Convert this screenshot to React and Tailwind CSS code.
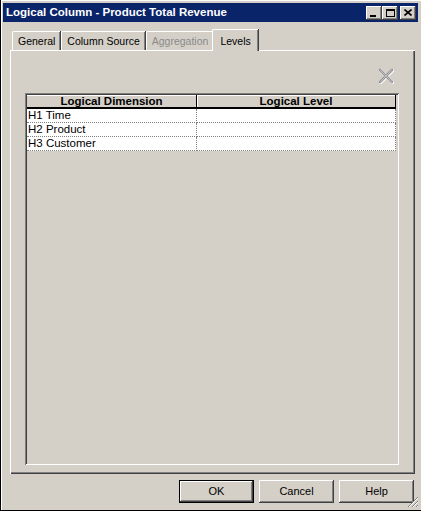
import { useState } from "react";

const raised =
  "bg-[#d4d0c8] shadow-[inset_-1px_-1px_#404040,inset_1px_1px_#ffffff,inset_-2px_-2px_#808080,inset_2px_2px_#d4d0c8]";

function TitleButton({ children }) {
  return (
    <div className={"w-[16px] h-[14px] flex items-center justify-center " + raised}>
      {children}
    </div>
  );
}

function Tab({ label, active, disabled }) {
  if (active) {
    return (
      <div className="relative z-10 h-[22px] px-[7px] -mx-[2px] flex items-start pt-[4px] bg-[#d4d0c8] border-l border-t border-white rounded-tl-[2px] shadow-[inset_-1px_0_#808080,1px_0_#404040]">
        <span className="text-black">{label}</span>
      </div>
    );
  }
  return (
    <div className="h-[20px] px-[5px] flex items-start pt-[2px] bg-[#d4d0c8] border-l border-t border-white rounded-tl-[2px] shadow-[inset_-1px_0_#808080,1px_0_#404040] mr-[1px]">
      <span className={disabled ? "text-[#8a8a8a]" : "text-black"}>{label}</span>
    </div>
  );
}

function Button({ label, isDefault }) {
  return (
    <button
      className={
        "w-[75px] h-[23px] text-[11px] text-black flex items-center justify-center " +
        (isDefault
          ? "bg-[#d4d0c8] border border-black shadow-[inset_-1px_-1px_#404040,inset_1px_1px_#ffffff,inset_-2px_-2px_#808080]"
          : raised)
      }
    >
      {label}
    </button>
  );
}

const rows = ["H1 Time", "H2 Product", "H3 Customer"];

export default function App() {
  const [tab] = useState("Levels");

  return (
    <div
      className="w-[421px] h-[511px] bg-[#d4d0c8] border-l border-b border-black flex flex-col p-[2px] pl-[2px] shadow-[inset_1px_1px_#ffffff]"
      style={{ fontFamily: '"Liberation Sans", Arial, sans-serif' }}
    >
      {/* title bar */}
      <div className="h-[19px] mt-[1px] bg-[#0a246a] flex items-center justify-between pl-[3px] pr-[2px] mr-[1px]">
        <span className="text-white font-bold text-[11.5px]">
          Logical Column - Product Total Revenue
        </span>
        <div className="flex items-center">
          <TitleButton>
            <div className="w-[6px] h-[2px] bg-black mt-[7px] -ml-[2px]" />
          </TitleButton>
          <TitleButton>
            <div className="w-[9px] h-[8px] border border-black border-t-2" />
          </TitleButton>
          <div className="w-[2px]" />
          <TitleButton>
            <svg width="8" height="7" viewBox="0 0 8 7">
              <path d="M0.5 0.5 L7.5 6.5 M7.5 0.5 L0.5 6.5" stroke="black" strokeWidth="1.6" />
            </svg>
          </TitleButton>
        </div>
      </div>

      {/* tabs */}
      <div className="mt-[7px] ml-[7px] mr-[4px] flex flex-col text-[10.5px]">
        <div className="flex items-end h-[22px] pl-[2px] -mb-[1px] text-[10.5px]">
          <Tab label="General" active={tab === "General"} />
          <Tab label="Column Source" active={tab === "Column Source"} />
          <Tab label="Aggregation" disabled />
          <Tab label="Levels" active={tab === "Levels"} />
        </div>

        {/* tab panel */}
        <div className="h-[424px] border-l border-t border-white shadow-[inset_-1px_-1px_#404040,inset_-2px_-2px_#808080] flex flex-col pl-[14px] pr-[16px] pt-[17px] pb-[9px]">
          <div className="flex justify-end pr-[5px] h-[16px]">
            <svg width="16" height="16" viewBox="0 0 16 16">
              <path d="M2 2 L14 14 M14 2 L2 14" stroke="#ffffff" strokeWidth="3.2" strokeLinecap="round" transform="translate(0.6 0.6)" />
              <path d="M2 2 L14 14 M14 2 L2 14" stroke="#9a9a9a" strokeWidth="2.6" strokeLinecap="round" />
              <path d="M2.5 2.5 L13.5 13.5 M13.5 2.5 L2.5 13.5" stroke="#c8c8c8" strokeWidth="0.8" strokeLinecap="round" />
            </svg>
          </div>

          {/* table */}
          <div className="mt-[9px] flex-1 p-[2px] shadow-[inset_1px_1px_#808080,inset_-1px_-1px_#ffffff,inset_2px_2px_#404040,inset_-2px_-2px_#d4d0c8] flex flex-col">
            <div className="flex h-[14px] text-black font-bold text-[11.5px] leading-[13px] pr-[1px]">
              <div className="w-[170px] text-center border-b-2 border-r border-black shadow-[inset_0_1px_#ffffff]">
                Logical Dimension
              </div>
              <div className="flex-1 text-center border-b-2 border-r border-black shadow-[inset_1px_1px_#ffffff]">
                Logical Level
              </div>
            </div>
            {rows.map((r) => (
              <div key={r} className="flex h-[14px] bg-white text-[11.5px] leading-[13px] text-black mr-[1px]">
                <div className="w-[170px] pl-[1px] border-b border-r border-dotted border-[#808080]">{r}</div>
                <div className="flex-1 border-b border-r border-dotted border-[#808080]" />
              </div>
            ))}
          </div>
        </div>
      </div>

      {/* buttons */}
      <div className="flex justify-end gap-[5px] mt-[6px] mr-[5px] relative">
        <Button label="OK" isDefault />
        <Button label="Cancel" />
        <Button label="Help" />
      </div>
      <div className="relative flex-1">
        <svg className="absolute right-[0px] bottom-[0px]" width="12" height="12" viewBox="0 0 12 12">
          <path d="M11 1 L1 11 M11 5 L5 11 M11 9 L9 11" stroke="#808080" strokeWidth="1" />
          <path d="M11 2 L2 11 M11 6 L6 11 M11 10 L10 11" stroke="#ffffff" strokeWidth="1" />
        </svg>
      </div>
    </div>
  );
}
